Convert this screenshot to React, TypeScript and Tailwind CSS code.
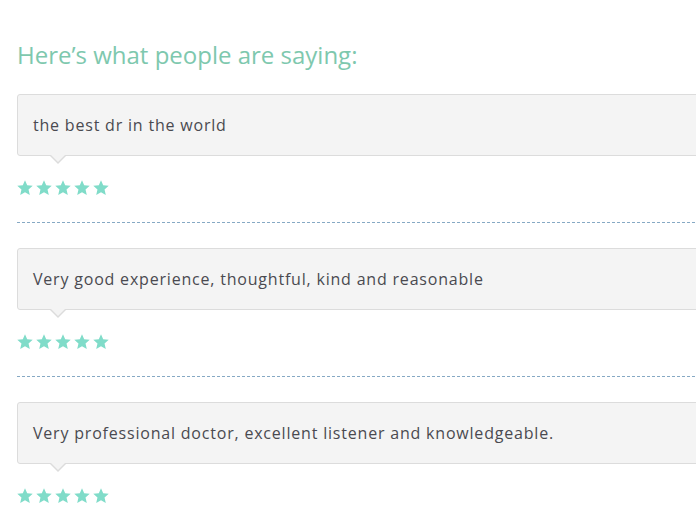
const reviews = [
  "the best dr in the world",
  "Very good experience, thoughtful, kind and reasonable",
  "Very professional doctor, excellent listener and knowledgeable.",
];

function Star() {
  return (
    <svg width="16" height="16" viewBox="0 0 24 24" className="fill-[#80dcc9] -mx-[0.5px]">
      <polygon points="12,0.5 15.3,8 23.6,8.7 17.3,14.3 19.2,22.6 12,18.2 4.8,22.6 6.7,14.3 0.4,8.7 8.7,8" />
    </svg>
  );
}

function Review({ text }: { text: string }) {
  return (
    <div className="border-b border-dashed border-[#86a9c4] pb-[26px] mb-[25px]">
      <div className="relative h-[62px] flex items-center pl-[15px] bg-[#f4f4f4] border border-[#dcdcdc] rounded-[3px]">
        <p className="text-[16px] text-[#4a4a50] tracking-[0.8px]">{text}</p>
        <div className="absolute left-[31px] top-full w-0 h-0 border-l-[9px] border-r-[9px] border-t-[9px] border-l-transparent border-r-transparent border-t-[#dcdcdc]" />
        <div className="absolute left-[32px] top-full -mt-px w-0 h-0 border-l-[8px] border-r-[8px] border-t-[8px] border-l-transparent border-r-transparent border-t-[#f4f4f4]" />
      </div>
      <div className="flex gap-[4px] mt-[24px] h-[16px] items-center">
        {[0, 1, 2, 3, 4].map((i) => (
          <Star key={i} />
        ))}
      </div>
    </div>
  );
}

export default function App() {
  return (
    <div className="w-full h-screen bg-white overflow-hidden" style={{ fontFamily: "'Open Sans', 'Noto Sans', sans-serif" }}>
      <div className="w-[780px] pl-[17px] pt-[39px]">
        <h2 className="text-[24px] leading-[32px] text-[#7ec8ae] mb-[23px]">Here’s what people are saying:</h2>
        {reviews.map((r) => (
          <Review key={r} text={r} />
        ))}
      </div>
    </div>
  );
}
